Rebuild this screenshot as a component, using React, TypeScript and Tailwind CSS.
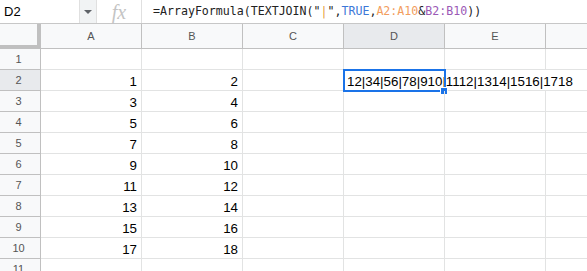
const cols = ["A", "B", "C", "D", "E"];

const rows: [string, string][] = [
  ["", ""],
  ["1", "2"],
  ["3", "4"],
  ["5", "6"],
  ["7", "8"],
  ["9", "10"],
  ["11", "12"],
  ["13", "14"],
  ["15", "16"],
  ["17", "18"],
  ["", ""],
];

function FormulaBar() {
  return (
    <div className="flex h-[24px] border-b border-[#c7c7c7] bg-white">
      <div className="flex w-[80px] items-center border-r border-[#e0e0e0] pl-[4px] text-[13px] text-black">
        D2
      </div>
      <div className="flex w-[17px] items-center justify-center border-r border-[#e0e0e0] bg-[#f1f3f4]">
        <svg width="8" height="4" viewBox="0 0 8 4">
          <path d="M0 0h8L4 4z" fill="#5f6368" />
        </svg>
      </div>
      <div className="flex w-[45px] items-center justify-center border-r border-[#e0e0e0]">
        <span className="font-['Liberation_Serif',serif] text-[20px] italic leading-none text-[#c4c4c4]">fx</span>
      </div>
      <div className="flex items-center whitespace-pre pl-[11px] font-['DejaVu_Sans_Mono',monospace] text-[11.6px] text-[#222]">
        =ArrayFormula(TEXTJOIN("<span className="text-[#e6a03a]">|</span>",
        <span className="text-[#3c78d8]">TRUE</span>,
        <span className="text-[#f29d5e]">A2:A10</span>&amp;
        <span className="text-[#9b59b6]">B2:B10</span>))
      </div>
    </div>
  );
}

function HeaderRow() {
  return (
    <div className="flex h-[25px] font-['Liberation_Sans',Arial,sans-serif] text-[11px] text-[#555]">
      <div className="w-[41px] border-r-4 border-b-4 border-[#c0c0c0] bg-[#f8f9fa]" />
      {cols.map((c) => (
        <div
          key={c}
          className={`flex w-[101px] items-center justify-center border-r border-b border-[#c0c0c0] ${
            c === "D" ? "bg-[#e8eaed]" : "bg-[#f8f9fa]"
          }`}
        >
          {c}
        </div>
      ))}
      <div className="flex-1 border-b border-[#c0c0c0] bg-[#f8f9fa]" />
    </div>
  );
}

export default function App() {
  return (
    <div className="h-[271px] w-[587px] overflow-hidden bg-white font-['Liberation_Sans',Arial,sans-serif]">
      <FormulaBar />
      <HeaderRow />
      {rows.map(([a, b], i) => {
        const n = i + 1;
        const selected = n === 2;
        return (
          <div key={n} className="flex h-[21px] text-[13.33px] leading-[15px] text-black">
            <div
              className={`flex w-[41px] items-center justify-center border-r border-b border-[#c0c0c0] pr-[3px] text-[11px] text-[#555] ${
                selected ? "bg-[#e8eaed]" : "bg-[#f8f9fa]"
              }`}
            >
              {n}
            </div>
            <div className="flex w-[101px] items-end justify-end border-r border-b border-[#e2e3e3] pr-[4px] pb-[1px]">
              {a}
            </div>
            <div className="flex w-[101px] items-end justify-end border-r border-b border-[#e2e3e3] pr-[4px] pb-[1px]">
              {b}
            </div>
            <div className="w-[101px] border-r border-b border-[#e2e3e3]" />
            <div className="relative z-10 flex w-[101px] items-end border-r border-b border-[#e2e3e3] pb-[1px] pl-[3px]">
              {selected && (
                <>
                  <span className="whitespace-nowrap">12|34|56|78|910|1112|1314|1516|1718</span>
                  <div className="absolute -top-[1px] -left-[1px] h-[23px] w-[103px] border-2 border-[#1a73e8]" />
                  <div className="absolute top-[17px] left-[96px] h-[8px] w-[8px] border border-white bg-[#1a73e8]" />
                </>
              )}
            </div>
            <div className={`w-[101px] border-b border-[#e2e3e3] ${selected ? "" : "border-r"}`} />
            <div className="flex-1 border-b border-[#e2e3e3]" />
          </div>
        );
      })}
    </div>
  );
}
